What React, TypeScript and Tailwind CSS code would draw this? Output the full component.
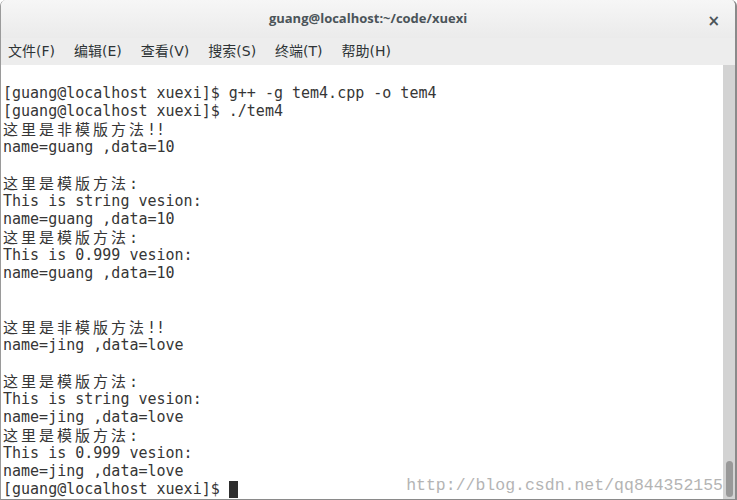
import React from 'react';

type Seg = { t: string; cjk?: boolean };

const prompt = '[guang@localhost xuexi]$ ';

const lines: Seg[][] = [
  [{ t: prompt + 'g++ -g tem4.cpp -o tem4' }],
  [{ t: prompt + './tem4' }],
  [{ t: '这里是非模版方法', cjk: true }, { t: '!!' }],
  [{ t: 'name=guang ,data=10' }],
  [],
  [{ t: '这里是模版方法', cjk: true }, { t: ':' }],
  [{ t: 'This is string vesion:' }],
  [{ t: 'name=guang ,data=10' }],
  [{ t: '这里是模版方法', cjk: true }, { t: ':' }],
  [{ t: 'This is 0.999 vesion:' }],
  [{ t: 'name=guang ,data=10' }],
  [],
  [],
  [{ t: '这里是非模版方法', cjk: true }, { t: '!!' }],
  [{ t: 'name=jing ,data=love' }],
  [],
  [{ t: '这里是模版方法', cjk: true }, { t: ':' }],
  [{ t: 'This is string vesion:' }],
  [{ t: 'name=jing ,data=love' }],
  [{ t: '这里是模版方法', cjk: true }, { t: ':' }],
  [{ t: 'This is 0.999 vesion:' }],
  [{ t: 'name=jing ,data=love' }],
];

const menus = ['文件(F)', '编辑(E)', '查看(V)', '搜索(S)', '终端(T)', '帮助(H)'];

const App: React.FC = () => {
  return (
    <div className="w-[737px] h-[500px] bg-white overflow-hidden flex flex-col border-l border-[#9a9a9a] border-r-2 border-r-[#8a8a8a] border-b border-b-[#8a8a8a] rounded-t-[6px]">
      {/* title bar */}
      <div className="h-[38px] shrink-0 flex items-center justify-center relative bg-gradient-to-b from-[#f6f6f6] to-[#ebebeb]">
        <span className="text-[13px] font-bold text-[#4b5459] font-['Open_Sans','DejaVu_Sans',sans-serif]">
          guang@localhost:~/code/xuexi
        </span>
        <span className="absolute right-[15px] top-[10px] text-[15px] font-bold text-[#4b5459] font-['DejaVu_Sans',sans-serif]">
          ×
        </span>
      </div>

      {/* menu bar */}
      <div className="h-[27px] shrink-0 flex items-center bg-[#ededed] pl-[7px] gap-[19px] text-[14px] text-[#2e3436] font-['DejaVu_Sans','Noto_Sans_CJK_SC',sans-serif]">
        {menus.map((m) => (
          <span key={m}>{m}</span>
        ))}
      </div>

      {/* terminal */}
      <div className="flex-1 flex min-h-0">
        <div className="flex-1 relative pt-[19px] pl-[2px] text-[15px] leading-[18px] text-[#363636] font-['DejaVu_Sans_Mono',monospace] whitespace-pre">
          {lines.map((segs, i) => (
            <div key={i} className="h-[18px]">
              {segs.map((s, j) =>
                s.cjk ? (
                  <span key={j} className="tracking-[3px] font-['Noto_Sans_CJK_SC',sans-serif]">
                    {s.t}
                  </span>
                ) : (
                  <span key={j}>{s.t}</span>
                )
              )}
            </div>
          ))}
          <div className="h-[18px] flex items-center">
            <span>{prompt}</span>
            <span className="inline-block w-[9px] h-[17px] bg-[#2e2e2e]" />
          </div>
          <div className="absolute right-0 bottom-[4px] text-[16.5px] text-[#b4b4b4] font-['Liberation_Mono',monospace]">
            http://blog.csdn.net/qq844352155
          </div>
        </div>
        {/* scrollbar */}
        <div className="w-[12px] bg-[#d3d3d3] flex flex-col justify-end items-center pb-[2px]">
          <div className="w-[7px] h-[36px] rounded-full bg-[#999999]" />
        </div>
      </div>
    </div>
  );
};

export default App;
